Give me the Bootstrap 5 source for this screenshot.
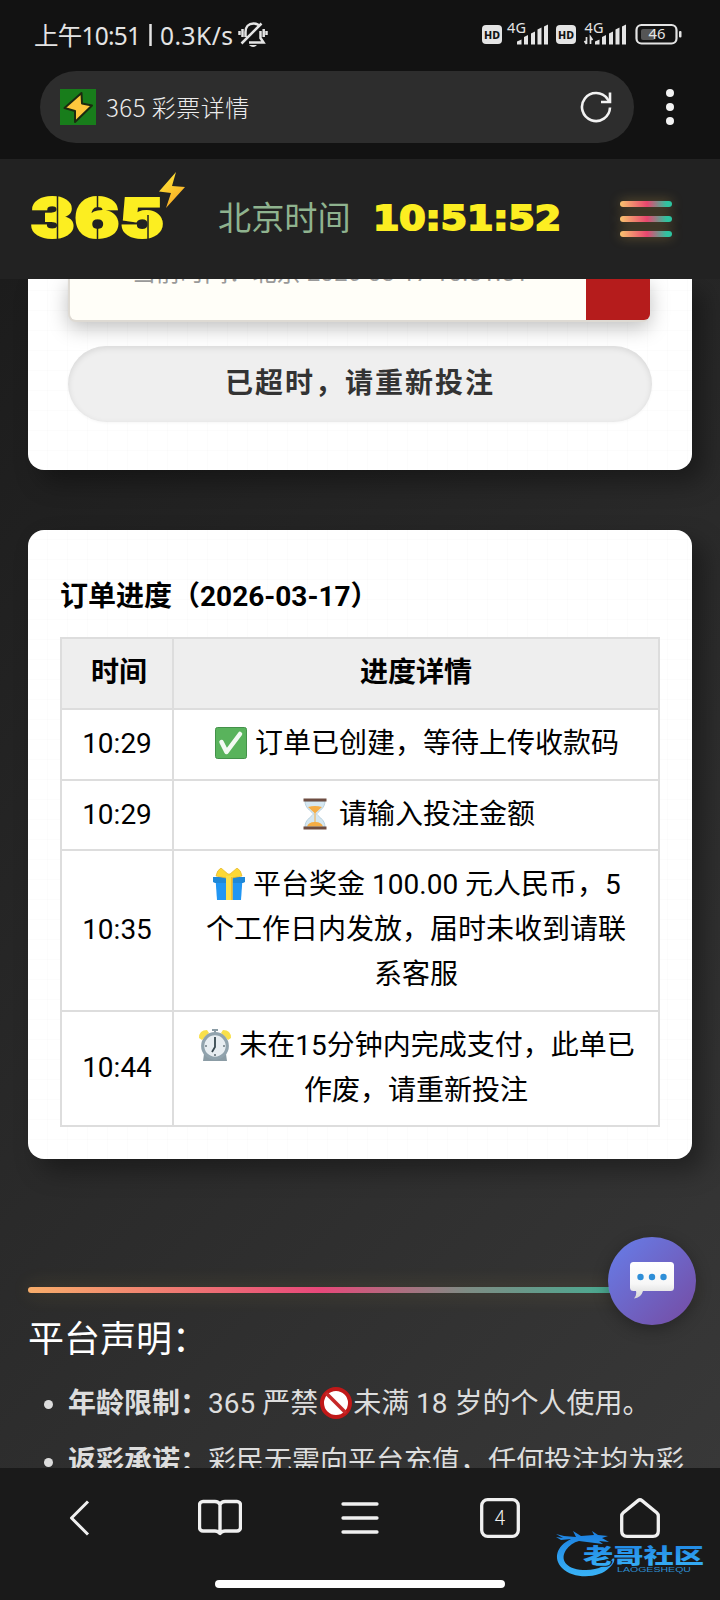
<!DOCTYPE html>
<html lang="zh-CN">
<head>
  <meta charset="UTF-8" />
  <meta name="viewport" content="width=device-width, initial-scale=1" />
  <title>365 彩票详情</title>
  <link href="https://cdn.jsdelivr.net/npm/bootstrap@5.3.0/dist/css/bootstrap.min.css" rel="stylesheet" />
  <style>
    body {
      background: #121212;
      font-family: Roboto, 'Noto Sans CJK SC', sans-serif;
      font-size: 28px;
      line-height: 1.6;
    }
    svg {
      display: block;
      flex: none;
    }
    #app {
      width: 720px;
      height: 1600px;
    }
    /* phone status bar */
    .status-bar {
      height: 70px;
      padding: 0 38px 0 34px;
    }
    /* browser address bar */
    .address-row {
      height: 89px;
      padding: 1px 46px 16px 40px;
    }
    .address-pill {
      width: 594px;
      height: 72px;
      padding: 0 22px 0 20px;
      background: #2d2d2d;
      color: #ececec;
      font-family: 'Noto Sans CJK SC', sans-serif;
      font-size: 24px;
      font-weight: 300;
      line-height: 36px;
    }
    .page-name {
      margin-left: 10px;
      letter-spacing: .5px;
    }
    .site-head {
      height: 120px;
      padding: 0 48px 0 30px;
      background: #222;
    }
    .beijing {
      width: 136px;
      margin-left: 30px;
      color: #8fb38f;
      font-size: 33.2px;
      line-height: 50px;
      white-space: nowrap;
    }
    .site-menu {
      width: 52px;
      gap: 9px;
      margin-left: auto;
    }
    .site-menu span {
      height: 6px;
      border-radius: 3px;
      background: linear-gradient(90deg, #f9c46f, #e8466f 52%, #2ec4a0 90%);
      box-shadow: 0 0 12px rgba(255, 200, 80, .35);
    }
    /* scrolled page */
    .page-body {
      height: 1189px;
      padding: 0 28px;
      background: linear-gradient(135deg, #1c1c1c, #2a2a2a 50%, #383838);
    }
    .paper {
      background-color: #fff;
      background-image:
        repeating-linear-gradient(0deg, transparent 0 19px, rgba(0, 0, 0, .012) 19px 20px),
        repeating-linear-gradient(90deg, transparent 0 19px, rgba(0, 0, 0, .012) 19px 20px);
      border-radius: 16px;
      box-shadow: 12px 12px 24px rgba(0, 0, 0, .35);
    }
    .pay-panel {
      height: 191px;
      padding: 0 40px;
      border-radius: 0 0 16px 16px;
    }
    .ticket {
      width: 582px;
      height: 43px;
      margin-right: 2px;
      background: #fffef8;
      border: solid #dedad3;
      border-width: 0 0 2px 2px;
      border-radius: 0 0 8px 8px;
      box-shadow: 0 6px 20px rgba(0, 0, 0, .25);
    }
    .ticket-text {
      margin: -24px 0 0 62px;
      color: #999;
      font-size: 24px;
      line-height: 36px;
      letter-spacing: .1px;
      white-space: nowrap;
    }
    .ticket-stub {
      width: 64px;
      background: #b51c1c;
      border-radius: 0 0 6px 0;
    }
    .retry-btn {
      width: 584px;
      height: 76px;
      margin: 24px 0 0 0;
      padding: 0 0 1px;
      background: #efefef;
      border: 0;
      color: #333;
      font-size: 28px;
      font-weight: 700;
      letter-spacing: 2px;
      line-height: 45px;
      box-shadow: inset 0 2px 6px rgba(0, 0, 0, .1), 0 1px 3px rgba(0, 0, 0, .04);
    }
    .order-panel {
      height: 629px;
      margin-top: 60px;
      padding: 44px 32px 0;
      color: #000;
    }
    .order-panel h2 {
      margin: 0 0 18px;
      font-size: 28px;
      font-weight: 700;
      line-height: 45px;
    }
    .progress-table {
      width: 600px;
      margin: 0;
      border-collapse: collapse;
      table-layout: fixed;
      text-align: center;
      vertical-align: middle;
      color: #000;
    }
    .progress-table th,
    .progress-table td {
      padding: 12px 18px;
      border: 2px solid #ddd;
      background: #fff;
      line-height: 44.8px;
    }
    .progress-table th {
      background: #eee;
    }
    .progress-table th:first-child {
      padding-left: 22px;
    }
    .emo {
      display: inline-block;
      width: 32px;
      height: 32px;
      margin: 0 1px 0 2px;
      vertical-align: -6px;
    }
    .glow-line {
      height: 6px;
      margin-top: 128px;
      border-radius: 3px;
      background: linear-gradient(90deg, #f8ad6a, #e8487a 44%, #7f8c84 66%, #3fb093 92%);
      box-shadow: 0 0 20px rgba(255, 210, 80, .2);
    }
    .notice-title {
      margin: 26px 0 0;
      color: #fff;
      font-size: 36px;
      font-weight: 400;
      line-height: 43px;
    }
    .notice-list {
      margin: 13px 0 0;
      padding-left: 40px;
      color: #ddd;
      white-space: nowrap;
    }
    .notice-list li {
      height: 58px;
      line-height: 58px;
    }
    .chat-btn {
      right: 24px;
      top: 1237px;
      width: 88px;
      height: 88px;
      background: linear-gradient(135deg, #667eea, #764ba2);
      box-shadow: 0 4px 16px rgba(0, 0, 0, .3);
    }
    /* browser toolbar */
    .tool-bar {
      height: 132px;
      padding: 0 10px;
      background: #1a1a1a;
    }
    .tool-row {
      height: 100px;
    }
    .home-bar {
      width: 290px;
      height: 8px;
      margin-top: 12px;
      background: #fff;
    }
    .site-mark {
      left: 551px;
      top: 1526px;
    }
  </style>
</head>
<body>
  <div id="app" class="position-relative overflow-hidden">

    <!-- Status bar -->
    <div class="status-bar d-flex align-items-center">
      <svg width="204" height="40" viewBox="0 0 204 40" fill="#e4e4e4" font-family="'Noto Sans', 'Noto Sans CJK SC', sans-serif" font-size="24.5">
        <text x="0" y="29.500" textLength="107">上午10:51</text>
        <path d="M116.500 9v22" stroke="#e4e4e4" stroke-width="2.500" />
        <text x="126" y="29.500" textLength="73">0.3K/s</text>
      </svg>
      <svg width="32" height="30" viewBox="0 0 32 30" fill="none" stroke="#e4e4e4" stroke-width="2.500">
        <path d="M7.500 17v-5c0-5 3-8.500 8-8.500 3 0 5 1 6.500 3M22.500 11v7l3 4.500H11M3.500 23.500 23.500 3.500M1.500 11v4M4.500 9v8M28.500 11v4M25.700 9v8" />
        <path d="M11 25h8q-4 4-8 0" fill="#e4e4e4" stroke="none" />
      </svg>
      <svg class="ms-auto" width="202" height="40" viewBox="0 0 202 40" fill="#e4e4e4" font-family="'Noto Sans', sans-serif">
        <g id="hd">
          <rect x="2" y="10" width="20" height="19" rx="4" />
          <text x="4" y="23.500" font-size="11" font-weight="800" fill="#121212" textLength="16" lengthAdjust="spacingAndGlyphs">HD</text>
        </g>
        <use href="#hd" x="74" />
        <text x="27" y="18" font-size="14.500" textLength="19">4G</text>
        <text x="104.500" y="18" font-size="14.500" textLength="19">4G</text>
        <g id="signal">
          <path d="M37 29.500v-3l4.500-2v5zM44 29.500v-7.500l4-2v9.500zM51 29.500v-11l4-2v13zM57.500 29.500v-15l4-2v17zM64 29.500v-18l4-2v20z" />
        </g>
        <use href="#signal" x="78" />
        <path d="M106.500 22v7m-2-3 2 3M110.500 29v-7l2 3" fill="none" stroke="#e4e4e4" stroke-width="1.700" />
        <rect x="156.500" y="10" width="40" height="18.500" rx="5" fill="none" stroke="#e4e4e4" stroke-width="2.200" />
        <rect x="161" y="14" width="14" height="11" rx="2" fill="#555" />
        <rect x="199" y="16" width="2.500" height="6.500" rx="1" />
        <text x="168.500" y="24.300" font-size="15" textLength="17" lengthAdjust="spacingAndGlyphs">46</text>
      </svg>
    </div>

    <!-- Address bar -->
    <div class="address-row d-flex align-items-center">
      <div class="address-pill rounded-pill d-flex align-items-center">
        <svg width="36" height="36" viewBox="0 0 36 36">
          <path fill="#187d1b" d="M0 0h36v36H0z" />
          <path d="M21.500 4 4.500 19l10.500 3L15 33 32 16.500l-10-2z" fill="#ffc83d" stroke="#1b2a10" stroke-width="2" stroke-linejoin="round" />
        </svg>
        <span class="page-name">365 彩票详情</span>
        <svg class="ms-auto" width="32" height="34" viewBox="0 0 32 34" fill="none" stroke="#f2f2f2" stroke-width="2.600">
          <path d="M30 17.500A14 14 0 1 1 27.500 9l1.500 2" />
          <path d="M30 2.500v9.500h-9" />
        </svg>
      </div>
      <svg class="ms-auto" width="8" height="36" viewBox="0 0 8 36" fill="#f2f2f2">
        <circle cx="4" cy="4" r="4" />
        <circle cx="4" cy="18" r="4" />
        <circle cx="4" cy="32" r="4" />
      </svg>
    </div>

    <!-- Site header -->
    <header class="site-head d-flex align-items-center">
      <svg width="158" height="100" viewBox="0 -10 158 100">
        <defs>
          <linearGradient id="bolt" x2=".6" y2="1">
            <stop offset="0" stop-color="#fff03a" />
            <stop offset="1" stop-color="#f9a825" />
          </linearGradient>
        </defs>
        <text x="0" y="58" font-family="Inter, sans-serif" font-weight="900" font-size="54" fill="#fcee21" stroke="#fcee21" stroke-width="2" textLength="134" lengthAdjust="spacingAndGlyphs">365</text>
        <path d="M27.500 16v44M67.500 16v14M67.500 47v14M118 36v25" stroke="#222" stroke-width="1.500" />
        <path d="M146-7 129 12.500l12 1.500-5 15 19-21-13-1z" fill="url(#bolt)" />
      </svg>
      <div class="beijing">北京时间</div>
      <svg width="208" height="40" viewBox="0 0 208 40">
        <text x="19" y="30.500" font-family="'DejaVu Sans', sans-serif" font-weight="700" font-size="34.500" fill="#fcee21" stroke="#fcee21" stroke-width="2" textLength="188" lengthAdjust="spacingAndGlyphs">10:51:52</text>
      </svg>
      <div class="site-menu d-flex flex-column">
        <span></span>
        <span></span>
        <span></span>
      </div>
    </header>

    <main class="page-body overflow-hidden">
      <!-- Payment panel -->
      <section class="paper pay-panel d-flex flex-column align-items-center">
        <div class="ticket d-flex justify-content-between flex-shrink-0">
          <div class="ticket-text">当前时间：北京 2026-03-17 10:51:51</div>
          <div class="ticket-stub"></div>
        </div>
        <button type="button" class="btn retry-btn rounded-pill">已超时，请重新投注</button>
      </section>

      <!-- Order progress -->
      <section class="paper order-panel">
        <h2>订单进度（2026-03-17）</h2>
        <table class="progress-table">
          <colgroup>
            <col style="width: 112px">
            <col>
          </colgroup>
          <tr>
            <th>时间</th>
            <th>进度详情</th>
          </tr>
          <tr>
            <td>10:29</td>
            <td><svg class="emo" viewBox="0 0 32 32">
                <rect x=".5" y=".5" width="31" height="31" rx="2" fill="#59b35c" stroke="#43914a" />
                <path d="m6.500 15 5 10L25 7" fill="none" stroke="#f3faf3" stroke-width="4.500" stroke-linecap="round" stroke-linejoin="round" />
              </svg> 订单已创建，等待上传收款码</td>
          </tr>
          <tr>
            <td>10:29</td>
            <td><svg class="emo" viewBox="0 0 32 32">
                <path d="M6 3h20c0 7-5 9-8.500 13C21 20 26 22 26 29H6c0-7 5-9 8.500-13C11 12 6 10 6 3z" fill="#d5e7f1" stroke="#adc8d5" stroke-width=".8" />
                <path d="M9 9q7-2 14 0l-6.500 6v9q6 0 7.500 4.500H8Q9.500 24 15.500 24v-9z" fill="#f5ad45" />
                <path d="M4.500.500h23v3h-23zM4.500 28.500h23v3h-23z" fill="#6d4c41" />
              </svg> 请输入投注金额</td>
          </tr>
          <tr>
            <td>10:35</td>
            <td><svg class="emo" viewBox="0 0 32 32">
                <path d="M2.500 11h27l-1.500 21H4z" fill="#2196f3" />
                <path d="M0 9h32v5l-2 1H2l-2-1z" fill="#1e88d8" />
                <path d="M3 8q1-6 5-8l7 6h2l7-6q4 2 5 8l-10 2h-6z" fill="#fdd835" stroke="#e3b52c" stroke-width=".7" />
                <path d="M13 8h6.500v24H13z" fill="#fbe04a" />
                <path d="M18 9h1.500v23H18z" fill="#f5bb2e" />
              </svg> 平台奖金 100.00 元人民币，5<br>个工作日内发放，届时未收到请联<br>系客服</td>
          </tr>
          <tr>
            <td>10:44</td>
            <td><svg class="emo" viewBox="0 0 32 32">
                <path d="M0 9q0-8 8-8l2 3-7 7zM32 9q0-8-8-8l-2 3 7 7z" fill="#f9e04b" />
                <path d="M13 0h6v2h-2v3h-2V2h-2zM5 25h22l1 7H4z" fill="#8b9ca5" />
                <circle cx="16" cy="17" r="12.300" fill="#e7edf1" stroke="#91a3ad" stroke-width="3.200" />
                <path d="M16 8v10l-3 5" fill="none" stroke="#37474f" stroke-width="1.800" />
                <path d="M6 17h2M24 17h2M16 25v2" stroke="#37474f" stroke-width="1.200" />
              </svg> 未在15分钟内完成支付，此单已<br>作废，请重新投注</td>
          </tr>
        </table>
      </section>

      <!-- Notice -->
      <div class="glow-line"></div>
      <h3 class="notice-title">平台声明：</h3>
      <ul class="notice-list">
        <li><strong>年龄限制：</strong>365 严禁<svg class="emo" viewBox="0 0 32 32">
            <circle cx="16" cy="16" r="14" fill="#fff" stroke="#c01818" stroke-width="4" />
            <path d="m6 6 20 20" stroke="#c62828" stroke-width="3.500" />
          </svg>未满 18 岁的个人使用。</li>
        <li><strong>返彩承诺：</strong>彩民无需向平台充值，任何投注均为彩</li>
      </ul>
    </main>

    <!-- Browser toolbar -->
    <nav class="tool-bar">
      <div class="tool-row row g-0 row-cols-5 align-items-center">
        <div class="col d-flex justify-content-center">
          <svg width="44" height="44" viewBox="0 0 44 44" fill="none" stroke="#f0f0f0" stroke-width="3">
            <path d="M30 5.500 13.500 22 30 38.500" stroke-linejoin="round" />
          </svg>
        </div>
        <div class="col d-flex justify-content-center">
          <svg width="44" height="44" viewBox="0 0 44 44" fill="none" stroke="#f0f0f0" stroke-width="3.400" stroke-linejoin="round">
            <path d="M22 37.500c-1.500-2-3-2.500-5-2.500H5a3.500 3.500 0 0 1-3.500-3.500V9A3.500 3.500 0 0 1 5 5.500h12q3.500 0 5 3 1.500-3 5-3h12A3.500 3.500 0 0 1 42.500 9v22.500A3.500 3.500 0 0 1 39 35H27c-2 0-3.500.500-5 2.500zM22 8v28" />
          </svg>
        </div>
        <div class="col d-flex justify-content-center">
          <svg width="44" height="44" viewBox="0 0 44 44" stroke="#f0f0f0" stroke-width="3.300" stroke-linecap="round">
            <path d="M5 8h34M5 22h34M5 36h34" />
          </svg>
        </div>
        <div class="col d-flex justify-content-center">
          <svg width="44" height="44" viewBox="0 0 44 44">
            <rect x="3.700" y="3.700" width="36.600" height="36.600" rx="6" fill="none" stroke="#f0f0f0" stroke-width="3.300" />
            <text x="22" y="29" font-family="'Noto Sans CJK SC', sans-serif" font-size="20" font-weight="300" fill="#f0f0f0" text-anchor="middle">4</text>
          </svg>
        </div>
        <div class="col d-flex justify-content-center">
          <svg width="44" height="44" viewBox="0 0 44 44" fill="none" stroke="#f0f0f0" stroke-width="3.300" stroke-linejoin="round">
            <path d="M3.700 20q0-2 1.500-3.300L20 4.600q2-1.600 4 0l14.800 12.100q1.500 1.300 1.500 3.300v15q0 5.300-5.300 5.300H9q-5.300 0-5.300-5.300z" />
          </svg>
        </div>
      </div>
      <div class="home-bar rounded-pill mx-auto"></div>
    </nav>

    <!-- Floating chat button -->
    <div class="chat-btn position-absolute rounded-circle d-flex align-items-center justify-content-center">
      <svg width="44" height="38" viewBox="0 0 44 38">
        <defs>
          <linearGradient id="bubble" x2="0" y2="1">
            <stop offset="0" stop-color="#fff" />
            <stop offset=".6" stop-color="#f7f7f7" />
            <stop offset="1" stop-color="#d5d5d5" />
          </linearGradient>
        </defs>
        <path d="M3.500 0h37Q44 0 44 3.500v22q0 3.500-3.500 3.500H13q-2 7-9 7.500 3-3.500 2-7.500H3.500Q0 29 0 25.500v-22Q0 0 3.500 0z" fill="url(#bubble)" />
        <g fill="#2f8fd8">
          <circle cx="10.500" cy="15" r="3.200" />
          <circle cx="22" cy="15" r="3.200" />
          <circle cx="33.500" cy="15" r="3.200" />
        </g>
      </svg>
    </div>

    <!-- Community watermark -->
    <svg class="site-mark position-absolute" width="160" height="56" viewBox="0 0 160 56">
      <defs>
        <linearGradient id="sea" x2="0" y2="1">
          <stop offset="0" stop-color="#1b7fe0" />
          <stop offset="1" stop-color="#39b3f7" />
        </linearGradient>
      </defs>
      <path d="M20 13C5 20 2 33 11 42c12 12 38 10 47 0 5-4 6-8 5-11-6 8-17 14-31 13C14 43 9 33 15 24q5-7 13-9l24 3-4-3 10 1-7-4 6-2-10-1-6-4 2 4-13 1-8-5 3 6-12-1-8-2 7 4-7-1 5 3z" fill="url(#sea)" />
      <text x="32" y="37" font-family="'Noto Sans CJK SC', sans-serif" font-size="21" font-weight="900" fill="url(#sea)" stroke="#1a1a1a" stroke-width="2" paint-order="stroke" textLength="121" lengthAdjust="spacingAndGlyphs">老哥社区</text>
      <text x="66" y="46" font-family="'Liberation Sans', sans-serif" font-size="7" fill="#2d8ed0" textLength="74" lengthAdjust="spacingAndGlyphs">LAOGESHEQU</text>
    </svg>
  </div>
</body>
</html>
